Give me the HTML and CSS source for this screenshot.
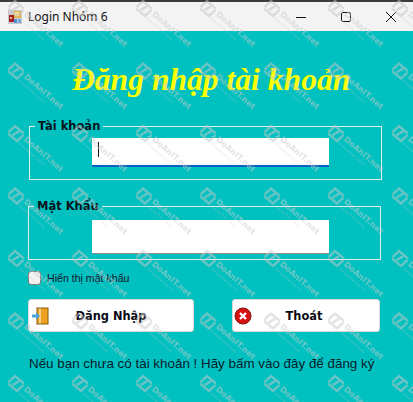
FILE: index.html
```html
<!DOCTYPE html>
<html lang="vi">
<head>
<meta charset="utf-8">
<title>Login Nhóm 6</title>
<link rel="stylesheet" href="styles.css">
</head>
<body>
<div class="window">
  <header class="titlebar">
    <svg class="app-icon" width="14" height="14" viewBox="0 0 14 14">
      <rect x="0" y="0" width="14" height="14" fill="#c9c9cf"/>
      <rect x="1" y="5" width="5" height="7" fill="#a8201c"/>
      <rect x="2" y="7" width="2" height="2" fill="#eeb0a0"/>
      <rect x="6" y="1" width="7" height="7" fill="#e8b040"/>
      <rect x="7" y="2" width="4" height="4" fill="#f6dc90"/>
      <rect x="6" y="9" width="3" height="4" fill="#4a90d8"/>
      <rect x="10" y="9" width="3" height="4" fill="#70a8e0"/>
    </svg>
    <span class="app-title">Login Nhóm 6</span>
    <div class="controls">
      <svg width="12" height="12" viewBox="0 0 12 12"><path d="M1 6.5H11" stroke="#111" stroke-width="1" fill="none"/></svg>
      <svg width="12" height="12" viewBox="0 0 12 12"><rect x="1.5" y="1.5" width="9" height="9" rx="1.5" stroke="#111" stroke-width="1" fill="none"/></svg>
      <svg width="12" height="12" viewBox="0 0 12 12"><path d="M1 1L11 11M11 1L1 11" stroke="#111" stroke-width="1" fill="none"/></svg>
    </div>
  </header>
  <main class="form">
    <h1 class="heading">Đăng nhập tài khoản</h1>
    <fieldset class="group group-user">
      <legend class="group-label">Tài khoản</legend>
      <div class="field field-focus"><span class="caret"></span></div>
    </fieldset>
    <fieldset class="group group-pass">
      <legend class="group-label">Mật Khẩu</legend>
      <div class="field field-plain"></div>
    </fieldset>
    <label class="show-pass"><span class="checkbox"></span><span>Hiển thị mật khẩu</span></label>
    <div class="actions">
      <button class="btn btn-login" type="button">
        <svg class="btn-icon" width="18" height="18" viewBox="0 0 18 18">
          <rect x="6" y="1" width="11" height="16" fill="#eea11e" stroke="#8a5a14" stroke-width="1"/>
          <path d="M9 1.5V16.5" stroke="#fff" stroke-width="1"/>
          <path d="M1 7.5H5V5.5L9 9L5 12.5V10.5H1Z" fill="#4aa2e4"/>
        </svg>
        <span class="btn-text">Đăng Nhập</span>
      </button>
      <button class="btn btn-exit" type="button">
        <svg class="btn-icon" width="18" height="18" viewBox="0 0 18 18">
          <circle cx="9" cy="9" r="8" fill="#d8110f" stroke="#7c1210" stroke-width="1"/>
          <path d="M6 6L12 12M12 6L6 12" stroke="#fff" stroke-width="2.4" fill="none"/>
        </svg>
        <span class="btn-text">Thoát</span>
      </button>
    </div>
    <p class="signup">Nếu bạn chưa có tài khoản ! Hãy bấm vào đây để đăng ký</p>
  </main>
  <svg class="watermark" width="413" height="402" aria-hidden="true">
    <defs>
      <pattern id="wm" x="0" y="-1" width="64" height="62.5" patternUnits="userSpaceOnUse">
        <g fill="none" stroke="#c8c8c8" stroke-width="2.4" stroke-linejoin="miter">
          <path d="M24 9.5L15 2L8.5 8"/>
          <path d="M8 9.5L17 17L23.5 11"/>
          <path d="M12.5 11L19.5 7"/>
        </g>
        <g transform="translate(23.5 16) rotate(41)">
          <text class="wm-name" x="0" y="0">DoAnIT.net</text>
          <text class="wm-sub" x="-1" y="6">Download Share Tutorials</text>
        </g>
      </pattern>
    </defs>
    <rect width="413" height="402" fill="url(#wm)"/>
  </svg>
</div>
</body>
</html>
```
FILE: styles.css
```css
html, body {
  margin: 0;
  padding: 0;
}
body {
  background: #00c0c0;
  font-family: "Liberation Sans", Arial, sans-serif;
}
.window {
  position: relative;
  width: 413px;
  height: 402px;
  overflow: hidden;
  background: #00c0c0;
}
.titlebar {
  box-sizing: border-box;
  height: 31px;
  display: flex;
  align-items: center;
  background: #f3f3f3;
  border-top: 2px solid #3a3a3a;
  padding: 0 10px 0 8px;
}
.app-icon {
  flex: none;
  margin-right: 6px;
}
.app-title {
  font-family: "Noto Sans", "Open Sans", sans-serif;
  font-size: 12px;
  color: #111;
}
.controls {
  margin-left: auto;
  display: flex;
  gap: 33px;
  margin-right: 6px;
}
.form {
  display: flex;
  flex-direction: column;
  align-items: flex-start;
}
.heading {
  margin: 32px 0 22px 72px;
  height: 34px;
  font: italic bold 31.6px/34px "Liberation Serif", "Times New Roman", serif;
  color: #ffff00;
  white-space: nowrap;
}
.group {
  box-sizing: border-box;
  width: 353px;
  margin: 0;
  padding: 0;
  border: 1px solid #e4ecec;
  min-width: 0;
}
.group-user {
  height: 61px;
  margin-left: 29px;
  margin-bottom: 19px;
}
.group-pass {
  height: 61px;
  margin-left: 28px;
}
.group-label {
  padding: 0 3px;
  margin-left: 5px;
  font: bold 11.5px/14px "DejaVu Sans", Verdana, sans-serif;
  color: #06141c;
}
.field {
  box-sizing: border-box;
  width: 237px;
  background: #fff;
}
.field-focus {
  margin: 5px 0 0 62px;
  height: 29px;
  padding: 4px 0 0 6px;
  border-bottom: 2px solid #0a60c0;
}
.caret {
  display: block;
  width: 1px;
  height: 15px;
  background: #111;
}
.field-plain {
  margin: 7px 0 0 63px;
  height: 34px;
  border-bottom: 1px solid #8c8c8c;
}
.show-pass {
  display: flex;
  align-items: center;
  gap: 6px;
  margin: 11px 0 0 28px;
  font-size: 10.6px;
  line-height: 14px;
  color: #14142c;
}
.checkbox {
  box-sizing: border-box;
  width: 13px;
  height: 14px;
  border: 1px solid #7a7a7a;
  border-radius: 3px;
  background: #f2f2f2;
}
.actions {
  display: flex;
  margin: 14px 0 0 28px;
  gap: 38px;
}
.btn {
  box-sizing: border-box;
  height: 33px;
  padding: 0 1px;
  display: grid;
  grid-template-columns: 1fr auto 1fr;
  align-items: center;
  background: #fff;
  border: 1px solid #d8d8d8;
  border-radius: 3px;
  font: bold 11.4px "DejaVu Sans", Verdana, sans-serif;
  color: #0a0a14;
}
.btn-login {
  width: 166px;
}
.btn-exit {
  width: 148px;
  padding-right: 5px;
}
.btn-icon {
  justify-self: start;
}
.btn-login .btn-icon {
  margin-left: 1px;
}
.btn-text {
  grid-column: 2;
}
.signup {
  margin: 24px 0 0 29px;
  font-size: 13.4px;
  line-height: 16px;
  color: #06202c;
  white-space: nowrap;
}
.watermark {
  position: absolute;
  left: 0;
  top: 0;
  pointer-events: none;
  opacity: 0.55;
}
.wm-name {
  font: bold 8px "DejaVu Sans", sans-serif;
  fill: #cccccc;
}
.wm-sub {
  font: 2.6px "DejaVu Sans", sans-serif;
  fill: #cccccc;
}
```
